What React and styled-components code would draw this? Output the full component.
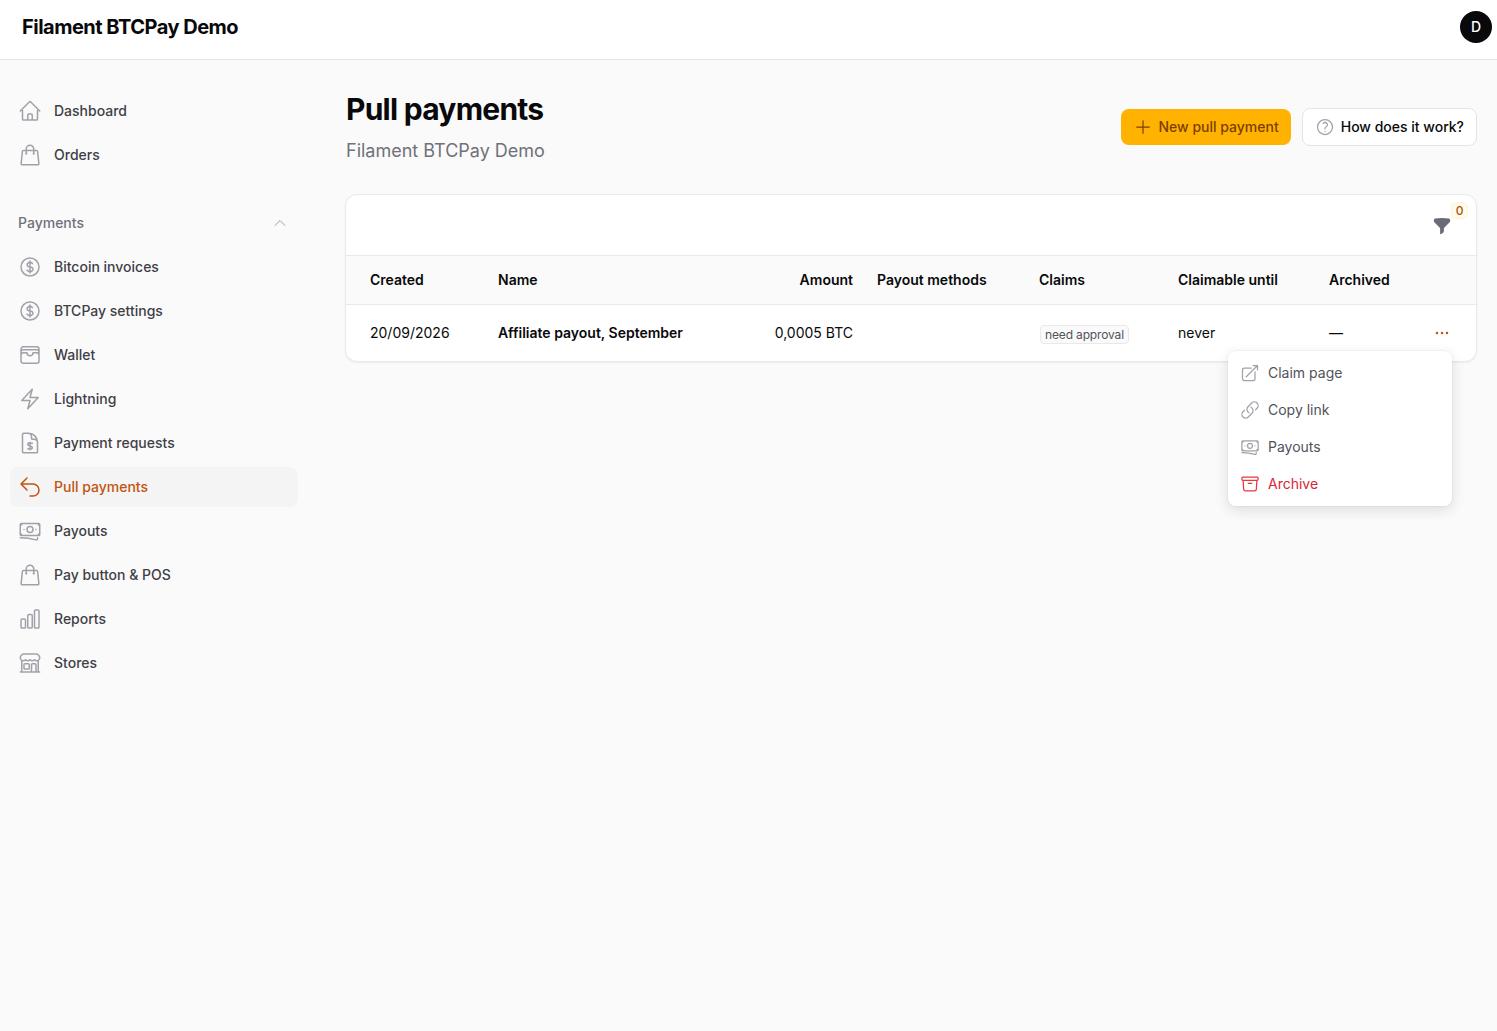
import React from 'react';
import styled, { createGlobalStyle } from 'styled-components';
import {
  HiOutlineHome,
  HiOutlineShoppingBag,
  HiOutlineCurrencyDollar,
  HiOutlineWallet,
  HiOutlineBolt,
  HiOutlineDocumentCurrencyDollar,
  HiOutlineArrowUturnLeft,
  HiOutlineBanknotes,
  HiOutlineChartBar,
  HiOutlineBuildingStorefront,
  HiOutlineChevronUp,
  HiOutlinePlus,
  HiOutlineQuestionMarkCircle,
  HiFunnel,
  HiOutlineEllipsisHorizontal,
  HiOutlineArrowTopRightOnSquare,
  HiOutlineLink,
  HiOutlineArchiveBox,
} from 'react-icons/hi2';

const GlobalStyle = createGlobalStyle`
  html, body {
    margin: 0;
    padding: 0;
    background: #fafafa;
    color: #09090b;
    font-family: Inter, "Liberation Sans", sans-serif;
    font-size: 14px;
    line-height: 20px;
    -webkit-font-smoothing: antialiased;
  }
  * { box-sizing: border-box; }
`;

const Page = styled.div`
  min-height: 100vh;
  display: flex;
  flex-direction: column;
`;

const Topbar = styled.header`
  height: 60px;
  display: flex;
  align-items: center;
  justify-content: space-between;
  padding: 0 5px 5px 22px;
  background: #fff;
  border-bottom: 1px solid #e4e4e7;
`;

const Brand = styled.div`
  font-size: 20px;
  font-weight: 700;
  letter-spacing: -0.5px;
  line-height: 24px;
`;

const Avatar = styled.div`
  width: 32px;
  height: 32px;
  border-radius: 50%;
  background: #09090b;
  color: #fff;
  font-size: 14px;
  font-weight: 500;
  display: flex;
  align-items: center;
  justify-content: center;
`;

const Body = styled.div`
  display: flex;
  flex: 1;
`;

const Sidebar = styled.nav`
  width: 308px;
  flex: none;
  padding: 31px 10px 0;
  display: flex;
  flex-direction: column;
  gap: 28px;
`;

const NavGroup = styled.div`
  display: flex;
  flex-direction: column;
  gap: 4px;
`;

const NavLabel = styled.div`
  height: 40px;
  padding: 0 10px 0 8px;
  display: flex;
  align-items: center;
  justify-content: space-between;
  font-size: 14px;
  font-weight: 500;
  color: #71717a;
  svg {
    width: 16px;
    height: 16px;
    color: #a1a1aa;
  }
`;

const NavItem = styled.a`
  height: 40px;
  padding: 0 8px;
  display: flex;
  align-items: center;
  gap: 12px;
  border-radius: 8px;
  font-size: 14px;
  font-weight: 500;
  color: ${(props) => (props.$active ? '#c2540f' : '#3f3f46')};
  background: ${(props) => (props.$active ? '#f4f4f5' : 'transparent')};
  svg {
    width: 24px;
    height: 24px;
    flex: none;
    color: ${(props) => (props.$active ? '#c2540f' : '#a1a1aa')};
  }
`;

const Main = styled.main`
  flex: 1;
  min-width: 0;
  padding: 31px 20px 0 38px;
`;

const PageHead = styled.div`
  display: flex;
  align-items: center;
  justify-content: space-between;
  margin-bottom: 29px;
`;

const Title = styled.h1`
  margin: 0;
  font-size: 30px;
  line-height: 36px;
  font-weight: 700;
  letter-spacing: -0.75px;
`;

const Subtitle = styled.p`
  margin: 10px 0 0;
  font-size: 18px;
  line-height: 28px;
  color: #71717a;
`;

const Actions = styled.div`
  display: flex;
  align-items: center;
  gap: 11px;
  margin-bottom: 2px;
`;

const Button = styled.button`
  height: ${(props) => (props.$primary ? '36px' : '38px')};
  padding: 0 12px;
  display: inline-flex;
  align-items: center;
  gap: 6px;
  border-radius: 8px;
  font-family: inherit;
  font-size: 14px;
  line-height: 20px;
  font-weight: 500;
  border: ${(props) => (props.$primary ? 'none' : '1px solid #e4e4e7')};
  background: ${(props) => (props.$primary ? '#ffb300' : '#fff')};
  color: ${(props) => (props.$primary ? '#7c3f00' : '#09090b')};
  svg {
    width: 20px;
    height: 20px;
    color: ${(props) => (props.$primary ? '#7c3f00' : '#a1a1aa')};
  }
`;

const Card = styled.section`
  position: relative;
  margin-left: -1px;
  background: #fff;
  border: 1px solid #e9e9ec;
  border-radius: 12px;
  box-shadow: 0 1px 2px rgba(0, 0, 0, 0.06);
`;

const Toolbar = styled.div`
  height: 60px;
  padding: 0 24px 0 0;
  display: flex;
  align-items: center;
  justify-content: flex-end;
`;

const FilterButton = styled.div`
  position: relative;
  width: 20px;
  height: 20px;
  margin-top: 1px;
  color: #6b6b76;
  svg {
    width: 20px;
    height: 20px;
    display: block;
  }
`;

const FilterBadge = styled.span`
  position: absolute;
  top: -13px;
  right: -15px;
  width: 15px;
  height: 15px;
  border-radius: 4px;
  background: #fffbeb;
  box-shadow: 0 0 0 1px rgba(245, 158, 11, 0.12);
  color: #b45309;
  font-size: 12px;
  line-height: 15px;
  font-weight: 500;
  text-align: center;
`;

const Table = styled.table`
  width: 100%;
  table-layout: fixed;
  border-collapse: collapse;
`;

const Head = styled.th`
  height: 49px;
  padding: 0 12px;
  background: #fafafa;
  border-top: 1px solid #e9e9ec;
  border-bottom: 1px solid #e9e9ec;
  font-size: 14px;
  font-weight: 600;
  text-align: ${(props) => (props.$right ? 'right' : 'left')};
  white-space: nowrap;
  &:first-child {
    padding-left: 24px;
  }
`;

const Cell = styled.td`
  height: 56px;
  padding: 0 12px;
  font-size: 14px;
  font-weight: ${(props) => (props.$strong ? 600 : 400)};
  text-align: ${(props) => (props.$right ? 'right' : 'left')};
  white-space: nowrap;
  &:first-child {
    padding-left: 24px;
  }
`;

const Tag = styled.span`
  display: inline-block;
  margin: 3px 0 0 1px;
  padding: 0 4px;
  height: 19px;
  line-height: 18px;
  font-size: 12px;
  letter-spacing: -0.15px;
  color: #52525b;
  background: #fafafa;
  border: 1px solid #e9e9ec;
  border-radius: 4px;
  vertical-align: middle;
`;

const Dots = styled.span`
  display: flex;
  justify-content: flex-end;
  padding-right: 12px;
  color: #c2540f;
  svg {
    width: 20px;
    height: 20px;
    display: block;
  }
`;

const Menu = styled.div`
  position: absolute;
  top: 156px;
  right: 24px;
  width: 224px;
  height: 155px;
  padding: 3px 0 4px;
  background: #fff;
  border-radius: 8px;
  box-shadow: 0 0 0 1px rgba(0, 0, 0, 0.03), 0 4px 14px rgba(0, 0, 0, 0.12);
`;

const MenuItem = styled.a`
  height: 37px;
  padding: 0 12px;
  display: flex;
  align-items: center;
  gap: 8px;
  font-size: 14px;
  color: ${(props) => (props.$danger ? '#d92638' : '#52525b')};
  svg {
    width: 20px;
    height: 20px;
    flex: none;
    color: ${(props) => (props.$danger ? '#e5383f' : '#a1a1aa')};
  }
`;

const topLinks = [
  { label: 'Dashboard', icon: HiOutlineHome },
  { label: 'Orders', icon: HiOutlineShoppingBag },
];

const paymentLinks = [
  { label: 'Bitcoin invoices', icon: HiOutlineCurrencyDollar },
  { label: 'BTCPay settings', icon: HiOutlineCurrencyDollar },
  { label: 'Wallet', icon: HiOutlineWallet },
  { label: 'Lightning', icon: HiOutlineBolt },
  { label: 'Payment requests', icon: HiOutlineDocumentCurrencyDollar },
  { label: 'Pull payments', icon: HiOutlineArrowUturnLeft, active: true },
  { label: 'Payouts', icon: HiOutlineBanknotes },
  { label: 'Pay button & POS', icon: HiOutlineShoppingBag },
  { label: 'Reports', icon: HiOutlineChartBar },
  { label: 'Stores', icon: HiOutlineBuildingStorefront },
];

const menuItems = [
  { label: 'Claim page', icon: HiOutlineArrowTopRightOnSquare },
  { label: 'Copy link', icon: HiOutlineLink },
  { label: 'Payouts', icon: HiOutlineBanknotes },
  { label: 'Archive', icon: HiOutlineArchiveBox, danger: true },
];

const NavLink = ({ link }) => {
  const Icon = link.icon;
  return (
    <NavItem $active={link.active}>
      <Icon />
      {link.label}
    </NavItem>
  );
};

export default function App() {
  return (
    <Page>
      <GlobalStyle />
      <Topbar>
        <Brand>Filament BTCPay Demo</Brand>
        <Avatar>D</Avatar>
      </Topbar>
      <Body>
        <Sidebar>
          <NavGroup>
            {topLinks.map((link) => (
              <NavLink key={link.label} link={link} />
            ))}
          </NavGroup>
          <NavGroup>
            <NavLabel>
              Payments
              <HiOutlineChevronUp />
            </NavLabel>
            {paymentLinks.map((link) => (
              <NavLink key={link.label} link={link} />
            ))}
          </NavGroup>
        </Sidebar>
        <Main>
          <PageHead>
            <div>
              <Title>Pull payments</Title>
              <Subtitle>Filament BTCPay Demo</Subtitle>
            </div>
            <Actions>
              <Button $primary>
                <HiOutlinePlus />
                New pull payment
              </Button>
              <Button>
                <HiOutlineQuestionMarkCircle />
                How does it work?
              </Button>
            </Actions>
          </PageHead>
          <Card>
            <Toolbar>
              <FilterButton>
                <HiFunnel />
                <FilterBadge>0</FilterBadge>
              </FilterButton>
            </Toolbar>
            <Table>
              <colgroup>
                <col style={{ width: 140 }} />
                <col style={{ width: 209 }} />
                <col style={{ width: 170 }} />
                <col style={{ width: 162 }} />
                <col style={{ width: 139 }} />
                <col style={{ width: 151 }} />
                <col style={{ width: 98 }} />
                <col />
              </colgroup>
              <thead>
                <tr>
                  <Head>Created</Head>
                  <Head>Name</Head>
                  <Head $right>Amount</Head>
                  <Head>Payout methods</Head>
                  <Head>Claims</Head>
                  <Head>Claimable until</Head>
                  <Head>Archived</Head>
                  <Head />
                </tr>
              </thead>
              <tbody>
                <tr>
                  <Cell>20/09/2026</Cell>
                  <Cell $strong>Affiliate payout, September</Cell>
                  <Cell $right>0,0005 BTC</Cell>
                  <Cell />
                  <Cell>
                    <Tag>need approval</Tag>
                  </Cell>
                  <Cell>never</Cell>
                  <Cell>—</Cell>
                  <Cell>
                    <Dots>
                      <HiOutlineEllipsisHorizontal />
                    </Dots>
                  </Cell>
                </tr>
              </tbody>
            </Table>
            <Menu>
              {menuItems.map(({ label, icon: Icon, danger }) => (
                <MenuItem key={label} $danger={danger}>
                  <Icon />
                  {label}
                </MenuItem>
              ))}
            </Menu>
          </Card>
        </Main>
      </Body>
    </Page>
  );
}
